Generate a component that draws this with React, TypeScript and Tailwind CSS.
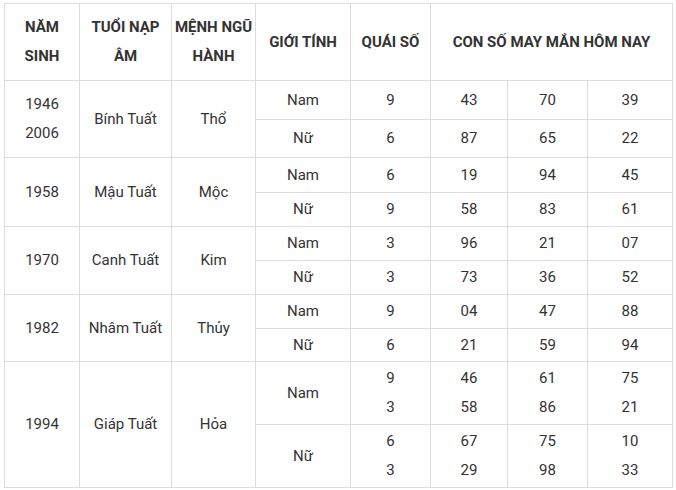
import React from "react";

type Row = {
  year: string[];
  nap: string;
  menh: string;
  subs: { g: string; q: string[]; n: string[][] }[];
};

const data: Row[] = [
  {
    year: ["1946", "2006"],
    nap: "Bính Tuất",
    menh: "Thổ",
    subs: [
      { g: "Nam", q: ["9"], n: [["43"], ["70"], ["39"]] },
      { g: "Nữ", q: ["6"], n: [["87"], ["65"], ["22"]] },
    ],
  },
  {
    year: ["1958"],
    nap: "Mậu Tuất",
    menh: "Mộc",
    subs: [
      { g: "Nam", q: ["6"], n: [["19"], ["94"], ["45"]] },
      { g: "Nữ", q: ["9"], n: [["58"], ["83"], ["61"]] },
    ],
  },
  {
    year: ["1970"],
    nap: "Canh Tuất",
    menh: "Kim",
    subs: [
      { g: "Nam", q: ["3"], n: [["96"], ["21"], ["07"]] },
      { g: "Nữ", q: ["3"], n: [["73"], ["36"], ["52"]] },
    ],
  },
  {
    year: ["1982"],
    nap: "Nhâm Tuất",
    menh: "Thủy",
    subs: [
      { g: "Nam", q: ["9"], n: [["04"], ["47"], ["88"]] },
      { g: "Nữ", q: ["6"], n: [["21"], ["59"], ["94"]] },
    ],
  },
  {
    year: ["1994"],
    nap: "Giáp Tuất",
    menh: "Hỏa",
    subs: [
      { g: "Nam", q: ["9", "3"], n: [["46", "58"], ["61", "86"], ["75", "21"]] },
      { g: "Nữ", q: ["6", "3"], n: [["67", "29"], ["75", "98"], ["10", "33"]] },
    ],
  },
];

function Cell({
  children,
  bold,
  className = "",
}: {
  children: React.ReactNode;
  bold?: boolean;
  className?: string;
}) {
  return (
    <div
      className={`bg-white flex flex-col items-center justify-center text-center text-[15px] leading-[29px] text-[#333333] ${
        bold ? "font-bold" : ""
      } ${className}`}
    >
      {children}
    </div>
  );
}

function Lines({ items }: { items: string[] }) {
  return (
    <>
      {items.map((t, i) => (
        <div key={i}>{t}</div>
      ))}
    </>
  );
}

export default function App() {
  return (
    <div className="w-[676px] h-[490px] bg-white pt-[3px] pl-[4px] font-['Roboto','Liberation_Sans',Arial,sans-serif]">
      <div className="grid w-[669px] gap-px p-px bg-[#dddddd] grid-cols-[74px_91px_83px_94px_79px_76px_79px_84px] grid-rows-[76px_38px_37px_34px_33px_33px_33px_33px_32px_62px_62px]">
        <Cell bold>
          <div>NĂM</div>
          <div>SINH</div>
        </Cell>
        <Cell bold>
          <div>TUỔI NẠP</div>
          <div>ÂM</div>
        </Cell>
        <Cell bold>
          <div>MỆNH NGŨ</div>
          <div>HÀNH</div>
        </Cell>
        <Cell bold>GIỚI TÍNH</Cell>
        <Cell bold>QUÁI SỐ</Cell>
        <Cell bold className="col-span-3">
          CON SỐ MAY MẮN HÔM NAY
        </Cell>
        {data.map((row, ri) => (
          <React.Fragment key={ri}>
            <Cell className="row-span-2">
              <Lines items={row.year} />
            </Cell>
            <Cell className="row-span-2">{row.nap}</Cell>
            <Cell className="row-span-2">{row.menh}</Cell>
            {row.subs.map((s, si) => (
              <React.Fragment key={si}>
                <Cell>{s.g}</Cell>
                <Cell>
                  <Lines items={s.q} />
                </Cell>
                {s.n.map((nn, ni) => (
                  <Cell key={ni}>
                    <Lines items={nn} />
                  </Cell>
                ))}
              </React.Fragment>
            ))}
          </React.Fragment>
        ))}
      </div>
    </div>
  );
}
